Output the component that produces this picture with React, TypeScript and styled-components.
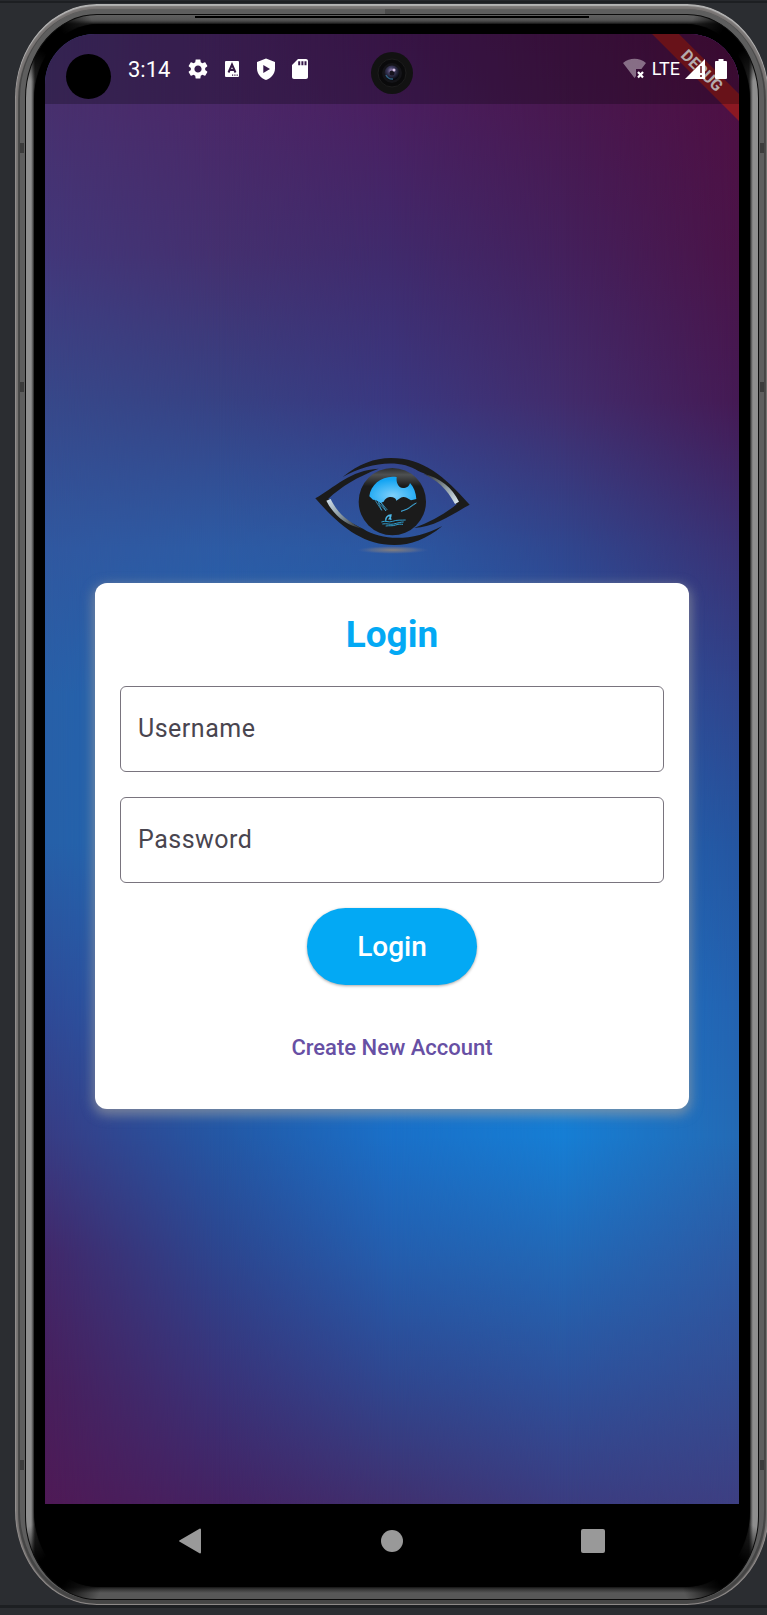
import React from "react";
import styled, { createGlobalStyle } from "styled-components";

const GlobalStyle = createGlobalStyle`
  *, *::before, *::after { box-sizing: border-box; }
  body {
    margin: 0;
    background: #2b2d31;
    font-family: Roboto, "Liberation Sans", sans-serif;
  }
`;

/* ---------- emulator window ---------- */

const Page = styled.div`
  min-height: 100vh;
  display: flex;
  flex-direction: column;
  overflow: hidden;
  padding-bottom: 7px;
  background: #2b2d31;
  border-top: 1px solid #27292d;
`;

const PanelEdge = styled.div<{ $size: number }>`
  height: ${(p) => p.$size}px;
  background: #1d1f22;
`;

const Rim = styled.div`
  flex: 1;
  display: flex;
  margin: 1px -2px 0 15px;
  padding: 10px 10px 5px;
  border-radius: 82px / 94px;
  background:
    linear-gradient(#3c3c3c, #3c3c3c) 5px 139px / 4px 10px no-repeat,
    linear-gradient(#3c3c3c, #3c3c3c) 5px 378px / 4px 10px no-repeat,
    linear-gradient(#3c3c3c, #3c3c3c) 5px 1456px / 4px 10px no-repeat,
    linear-gradient(#3c3c3c, #3c3c3c) right 5px top 139px / 4px 10px no-repeat,
    linear-gradient(#3c3c3c, #3c3c3c) right 5px top 378px / 4px 10px no-repeat,
    linear-gradient(#3c3c3c, #3c3c3c) right 5px top 1456px / 4px 10px no-repeat,
    linear-gradient(#4a4a4a, #4a4a4a) center top / 15px 10px no-repeat,
    #5e5e5e;
  box-shadow:
    inset 0 2px 1px #b4b4b4,
    inset 0 0 0 1px #8d8988,
    inset 0 2px 1px 3px #7b7776,
    inset 0 0 0 5px #454545;
`;

const InnerRim = styled.div`
  flex: 1;
  display: flex;
  padding: 9px 8px 12px;
  border: 1px solid #0c0c0c;
  border-radius: 72px / 84px;
  background:
    radial-gradient(circle at 24px 24px, #000 14px, transparent 46px),
    radial-gradient(circle at calc(100% - 24px) 24px, #000 14px, transparent 46px),
    radial-gradient(circle at 26px calc(100% - 26px), #000 16px, transparent 52px),
    radial-gradient(circle at calc(100% - 26px) calc(100% - 26px), #000 16px, transparent 52px),
    linear-gradient(#000, #000) center top 1px / 394px 2px no-repeat,
    linear-gradient(#606060, #555 5px, transparent 9px, transparent calc(100% - 12px), #585858 calc(100% - 6px)),
    linear-gradient(to right, #8e8e8e 5px, #222 9px, #222 calc(100% - 9px), #8e8e8e calc(100% - 5px));
`;

const Bezel = styled.div`
  flex: 1;
  display: flex;
  flex-direction: column;
  padding: 10px 11px 9px;
  border-radius: 64px / 76px;
  background: #000;
  box-shadow: 0 0 2px #000;
`;

/* ---------- screen ---------- */

const Screen = styled.div`
  position: relative;
  flex: 1;
  display: grid;
  overflow: hidden;
  border-radius: 50px 50px 0 0;
  background: #35498e;
`;

const Wallpaper = styled.div`
  grid-area: 1 / 1;
  display: grid;
  isolation: isolate;
`;

const WallpaperBand = styled.div<{ $colors: string[]; $from: number }>`
  grid-area: 1 / 1;
  background: linear-gradient(${(p) => p.$colors.join(", ")});
  ${(p) =>
    p.$from >= 0 &&
    `mask-image: linear-gradient(to right, transparent ${p.$from}%, #000 ${p.$from + 25}%);`}
`;

const stops = [0, 5, 15, 25, 35, 45, 55, 66, 75, 83, 92, 100];
const column = (list: string) => list.split(" ").map((c, i) => `#${c} ${stops[i]}%`);

const bands = [
  column("46306e 48306e 42377a 37488a 3058a0 2860a8 2660a8 2e4b98 383c84 42286a 481f5c 4f1a56"),
  column("4a2667 4a2868 44306f 374284 2d5ba4 1f66b4 1f6ab8 2464b2 2457a4 2d458e 3a3278 442262"),
  column("4a1b5c 4a1f60 402a6c 3a3880 2b58a2 1f66b4 1a70c4 1673cc 1a70c8 245eae 30468e 40306f"),
  column("48154c 48184f 44205c 422c6c 30468e 2658a6 1f6ab8 187acc 167ed4 2268b6 2e509a 3b3c80"),
  column("4e0e40 4e1044 4a1448 451a54 3a3174 30448c 2555a0 2462b0 246ab4 2d5aa4 344c92 3d3f82"),
];

const DebugBanner = styled.div`
  position: absolute;
  top: 27px;
  right: -43px;
  width: 160px;
  height: 19px;
  transform: rotate(45deg);
  background: #8b1822;
  color: #f2e6e7;
  font-size: 16px;
  font-weight: 700;
  line-height: 19px;
  text-align: center;
`;

const StatusBar = styled.header`
  grid-area: 1 / 1;
  align-self: start;
  z-index: 2;
  height: 70px;
  display: flex;
  align-items: center;
  justify-content: space-between;
  padding: 0 12px 0 83px;
  background: rgba(0, 0, 0, 0.25);
  color: #fff;
`;

const StatusGroup = styled.div<{ $gap: number }>`
  display: flex;
  align-items: center;
  gap: ${(p) => p.$gap}px;
`;

const Clock = styled.time`
  padding: 2px 6px 0 0;
  font-size: 22px;
  line-height: 24px;
`;

const Network = styled.span`
  font-size: 18px;
  line-height: 24px;
`;

const Signals = styled.div`
  display: flex;
  align-items: center;
  gap: 10px;
`;

const CameraHole = styled.div`
  position: absolute;
  z-index: 3;
  top: 20px;
  left: 21px;
  width: 45px;
  height: 45px;
  border-radius: 50%;
  background: #000;
`;

const Lens = styled.svg`
  position: absolute;
  z-index: 3;
  top: 18px;
  left: calc(50% - 21px);
`;

/* ---------- login ---------- */

const Main = styled.main`
  grid-area: 1 / 1;
  z-index: 1;
  display: flex;
  flex-direction: column;
  align-items: center;
  justify-content: center;
  padding: 0 50px 2px;
`;

const Card = styled.form`
  width: 100%;
  display: flex;
  flex-direction: column;
  align-items: center;
  gap: 25px;
  padding: 25px;
  border-radius: 12px;
  background: #fff;
  box-shadow: 0 4px 12px 2px rgba(158, 158, 158, 0.65);
`;

const Title = styled.h1`
  margin: 0;
  color: #03a9f4;
  font-size: 37px;
  font-weight: 700;
  line-height: 53px;
`;

const Field = styled.div`
  width: 100%;
  display: grid;
`;

const FieldInput = styled.input`
  grid-area: 1 / 1;
  width: 100%;
  height: 86px;
  padding: 0 18px;
  border: 1px solid #79747e;
  border-radius: 6px;
  outline: none;
  background: transparent;
  color: #1d1b20;
  font-family: inherit;
  font-size: 25px;
  &:focus { border-color: #6750a4; }
`;

const FieldLabel = styled.label`
  grid-area: 1 / 1;
  align-self: center;
  padding: 0 18px;
  color: #49454f;
  font-size: 25px;
  line-height: 30px;
  letter-spacing: 0.02em;
  pointer-events: none;
  ${FieldInput}:not(:placeholder-shown) + & { visibility: hidden; }
`;

const SubmitButton = styled.button`
  height: 77px;
  padding: 0 50px;
  border: 0;
  border-radius: 39px;
  background: #03a9f4;
  box-shadow: 0 1px 3px rgba(0, 0, 0, 0.35);
  color: #fff;
  font-family: inherit;
  font-size: 28px;
  font-weight: 500;
  cursor: pointer;
`;

const LinkButton = styled.button`
  height: 74px;
  padding: 2px 18px 0;
  border: 0;
  background: none;
  color: #6750a4;
  font-family: inherit;
  font-size: 22px;
  font-weight: 500;
  cursor: pointer;
`;

/* ---------- system navigation ---------- */

const NavBar = styled.nav`
  height: 74px;
  display: flex;
  align-items: center;
  justify-content: space-between;
  padding: 0 134px;
`;

const NavButton = styled.button`
  display: flex;
  padding: 0;
  border: 0;
  background: none;
  cursor: pointer;
`;

const GearIcon = () => (
  <svg width="24" height="24" viewBox="0 0 24 24" fill="#fff">
    <path d="M19.14 12.94c.04-.3.06-.61.06-.94 0-.32-.02-.64-.07-.94l2.03-1.58c.18-.14.23-.41.12-.61l-1.92-3.32c-.12-.22-.37-.29-.59-.22l-2.39.96c-.5-.38-1.03-.7-1.62-.94l-.36-2.54c-.04-.24-.24-.41-.48-.41h-3.84c-.24 0-.43.17-.47.41l-.36 2.54c-.59.24-1.13.57-1.62.94l-2.39-.96c-.22-.08-.47 0-.59.22L2.74 8.87c-.12.21-.08.47.12.61l2.03 1.58c-.05.3-.09.63-.09.94s.02.64.07.94l-2.03 1.58c-.18.14-.23.41-.12.61l1.92 3.32c.12.22.37.29.59.22l2.39-.96c.5.38 1.03.7 1.62.94l.36 2.54c.05.24.24.41.48.41h3.84c.24 0 .44-.17.47-.41l.36-2.54c.59-.24 1.13-.56 1.62-.94l2.39.96c.22.08.47 0 .59-.22l1.92-3.32c.12-.22.07-.47-.12-.61l-2.01-1.58zM12 15.6c-1.98 0-3.6-1.62-3.6-3.6s1.62-3.6 3.6-3.6 3.6 1.62 3.6 3.6-1.62 3.6-3.6 3.6z" />
  </svg>
);

const KeyboardIcon = () => (
  <svg width="24" height="24" viewBox="0 0 24 24">
    <rect x="5" y="4" width="14" height="16" rx="1" fill="#fff" />
    <path d="M8.5 15.5 12 7.500l3.500 8M9.800 13h4.400" fill="none" stroke="#351a45" strokeWidth="2" />
    <path d="M12 17.500h1.200v1.200H12zM14.300 17.500h1.200v1.200h-1.200zM16.600 17.500h1.200v1.200h-1.200z" fill="#351a45" />
  </svg>
);

const ShieldIcon = () => (
  <svg width="24" height="24" viewBox="0 0 24 24" fill="#fff">
    <path fillRule="evenodd" d="M12 1.500 3 5v6.500c0 5.400 3.800 9.700 9 11.500 5.200-1.800 9-6.100 9-11.500V5zM9.300 8v8l6.700-4z" />
  </svg>
);

const SdIcon = () => (
  <svg width="24" height="24" viewBox="0 0 24 24" fill="#fff">
    <path fillRule="evenodd" d="M18 2h-8L4 8v12c0 1.100.9 2 2 2h12c1.100 0 2-.9 2-2V4c0-1.100-.9-2-2-2zM10.200 4.200h2v4h-2zM13.400 4.200h2v4h-2zM16.500 4.200h2v4h-2z" />
  </svg>
);

const WifiIcon = () => (
  <svg width="24" height="22" viewBox="0 0 24 22">
    <path d="M0 5C3.500 2 7.500.8 11.500.8S19.500 2 23 5l-4.600 6H13v7l-1.500 2z" fill="#fff" opacity="0.4" />
    <path d="m15 14 5 5.500m0-5.500-5 5.500" stroke="#fff" strokeWidth="2.200" />
  </svg>
);

const SignalIcon = () => (
  <svg width="20" height="20" viewBox="0 0 20 20">
    <path d="M20 0v20H0z" fill="#fff" />
    <path d="M16 7v7m0 2v2" stroke="#67121a" strokeWidth="1.500" />
  </svg>
);

const BatteryIcon = () => (
  <svg width="12" height="20" viewBox="0 0 12 20" fill="#fff">
    <path d="M3.500 0h5v2H11a1 1 0 0 1 1 1v16a1 1 0 0 1-1 1H1a1 1 0 0 1-1-1V3a1 1 0 0 1 1-1h2.500z" />
  </svg>
);

const CameraLens = () => (
  <Lens width="42" height="42" viewBox="0 0 42 42" aria-hidden="true">
    <defs>
      <radialGradient id="lens" cx="0.45" cy="0.35" r="0.6">
        <stop offset="0" stopColor="#9b86b8" />
        <stop offset="0.4" stopColor="#3d3a5c" />
        <stop offset="1" stopColor="#07090f" />
      </radialGradient>
    </defs>
    <circle cx="21" cy="21" r="21" fill="#121212" />
    <circle cx="21" cy="21" r="14" fill="#0a0a0b" stroke="#1c1c1c" />
    <circle cx="21" cy="21" r="10" fill="#141418" />
    <circle cx="21" cy="21" r="7.500" fill="url(#lens)" />
    <path d="M15 23a7 7 0 0 0 7 4" fill="none" stroke="#2f5f80" strokeWidth="1.500" />
    <circle cx="21" cy="21" r="2.500" fill="#17131f" />
    <circle cx="23" cy="18" r="1.500" fill="#d9c3e6" />
  </Lens>
);

const EyeLogo = () => (
  <svg width="155" height="155" viewBox="44 -36 465 465" role="img" aria-label="Eye logo">
    <defs>
      <linearGradient id="iris" x1="0" y1="0" x2="0" y2="1">
        <stop offset="0" stopColor="#2a2c2d" />
        <stop offset="0.1" stopColor="#4e5152" />
        <stop offset="0.27" stopColor="#1b1b1b" />
      </linearGradient>
      <radialGradient id="sky" cx="0.5" cy="0.72" r="0.62">
        <stop offset="0" stopColor="#7fd0fb" />
        <stop offset="1" stopColor="#12a4f3" />
      </radialGradient>
      <linearGradient id="shineRight" x1="0" y1="0" x2="1" y2="1">
        <stop offset="0" stopColor="#2c2e2f" />
        <stop offset="0.55" stopColor="#8c9aa2" />
        <stop offset="1" stopColor="#e0edf3" />
      </linearGradient>
      <linearGradient id="shineLeft" x1="0" y1="0" x2="1" y2="1">
        <stop offset="0" stopColor="#d3e3ee" />
        <stop offset="0.5" stopColor="#84939c" />
        <stop offset="1" stopColor="#232425" />
      </linearGradient>
      <radialGradient id="ground">
        <stop offset="0" stopColor="#8f8378" stopOpacity="0.9" />
        <stop offset="0.6" stopColor="#6f7589" stopOpacity="0.55" />
        <stop offset="1" stopColor="#4a62a0" stopOpacity="0" />
      </radialGradient>
    </defs>
    <ellipse cx="277" cy="330" rx="108" ry="12" fill="url(#ground)" />
    <path d="M127 111C175 72 222 54 272 54c96 0 160 54 236 140-52 28-104 68-167 70 50-18 92-42 128-71-36-58-70-82-115-100C300 56 205 66 127 111z" fill="#1b1b1b" />
    <path d="M426 258c-48 40-94 57-144 57-100 0-168-62-237-140 54-30 106-86 190-89C172 110 122 140 84 176c26 48 60 70 104 90 60 38 152 38 238-8z" fill="#1b1b1b" />
    <path d="M368 101c52 12 88 42 108 84l-12 7c-24-46-54-72-96-91z" fill="url(#shineRight)" />
    <path d="M78 182l13-5c20 42 50 66 96 90-52-12-86-40-109-85z" fill="url(#shineLeft)" />
    <circle cx="276" cy="185" r="101" fill="url(#iris)" />
    <path d="M207 169c4-34 34-59 70-59 4 0 8 0 12 1-2 16 4 32 19 33 11 0 19-6 21-15 11 12 18 29 19 48l-16 4-13-8c-6-3-14-3-19 1l-12 8c-1-8-10-12-20-11-8 1-14 6-18 14l-10 4-14-9-8-1z" fill="url(#sky)" />
    <path d="M224 180l20 31-10-24 23 26-16-27 20 24M348 189c-12 4-20 14-28 18l-18 7c14-4 24-8 30-14z" fill="none" stroke="#43b4ea" strokeWidth="2" />
    <path d="M256 242c0-10 6-16 16-17l-1 6-6 8M268 226l4 14" fill="none" stroke="#4bb9ea" strokeWidth="4" />
    <path d="M243 246c12-6 22 3 34-2s26-3 39-4M246 252c14-3 22 3 34 0s22-6 30-6M256 258c12-2 20 1 30-3s16-2 22-2" fill="none" stroke="#2f9fd0" strokeWidth="3" />
  </svg>
);

export default function App() {
  return (
    <>
      <GlobalStyle />
      <Page>
        <PanelEdge $size={2} />
        <Rim>
          <InnerRim>
            <Bezel>
              <Screen>
                <Wallpaper aria-hidden="true">
                  {bands.map((colors, i) => (
                    <WallpaperBand key={i} $colors={colors} $from={(i - 1) * 25} />
                  ))}
                </Wallpaper>
                <DebugBanner>DEBUG</DebugBanner>
                <Main>
                  <EyeLogo />
                  <Card onSubmit={(e) => e.preventDefault()}>
                    <Title>Login</Title>
                    <Field>
                      <FieldInput id="username" type="text" placeholder=" " autoComplete="username" />
                      <FieldLabel htmlFor="username">Username</FieldLabel>
                    </Field>
                    <Field>
                      <FieldInput id="password" type="password" placeholder=" " autoComplete="current-password" />
                      <FieldLabel htmlFor="password">Password</FieldLabel>
                    </Field>
                    <SubmitButton type="submit">Login</SubmitButton>
                    <LinkButton type="button">Create New Account</LinkButton>
                  </Card>
                </Main>
                <StatusBar>
                  <StatusGroup $gap={10}>
                    <Clock>3:14</Clock>
                    <GearIcon />
                    <KeyboardIcon />
                    <ShieldIcon />
                    <SdIcon />
                  </StatusGroup>
                  <StatusGroup $gap={5}>
                    <WifiIcon />
                    <Network>LTE</Network>
                    <Signals>
                      <SignalIcon />
                      <BatteryIcon />
                    </Signals>
                  </StatusGroup>
                </StatusBar>
                <CameraHole />
                <CameraLens />
              </Screen>
              <NavBar aria-label="System navigation">
                <NavButton type="button" aria-label="Back">
                  <svg width="24" height="26" viewBox="0 0 24 26" fill="#999">
                    <path d="M20.500.7 1.200 12a1 1 0 0 0 0 2l19.300 11.300a1 1 0 0 0 1.500-1V1.700a1 1 0 0 0-1.500-1z" />
                  </svg>
                </NavButton>
                <NavButton type="button" aria-label="Home">
                  <svg width="24" height="24" viewBox="0 0 24 24" fill="#999">
                    <circle cx="12" cy="12" r="11" />
                  </svg>
                </NavButton>
                <NavButton type="button" aria-label="Recent apps">
                  <svg width="24" height="24" viewBox="0 0 24 24" fill="#999">
                    <rect width="24" height="24" rx="2" />
                  </svg>
                </NavButton>
              </NavBar>
            </Bezel>
          </InnerRim>
        </Rim>
        <PanelEdge $size={3} />
      </Page>
    </>
  );
}
